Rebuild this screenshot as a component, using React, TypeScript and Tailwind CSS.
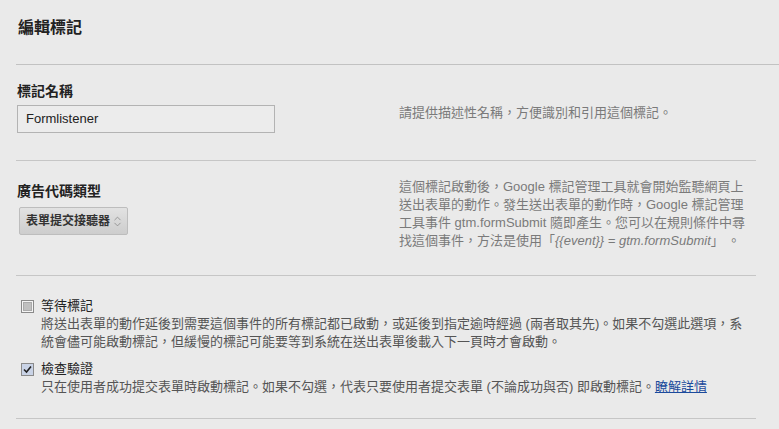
import { ChevronDown, ChevronUp } from "lucide-react";

const font = "font-['Liberation_Sans','Noto_Sans_CJK_TC',sans-serif]";

const Check = ({ checked }: { checked: boolean }) => (
    <span className="w-[13px] h-[13px] border border-[#8a8a8a] bg-[#f4f4f4] flex items-center justify-center shrink-0">
        {checked ? (
            <span className="w-[11px] h-[11px] bg-[#c9d3e6] flex items-center justify-center">
                <svg width="9" height="9" viewBox="0 0 9 9">
                    <path d="M1 4.5 L3.5 7 L8 1.5" fill="none" stroke="#222" strokeWidth="1.6" />
                </svg>
            </span>
        ) : (
            <span className="w-[9px] h-[9px] bg-[#c0c0c0] border border-[#aaa]" />
        )}
    </span>
);

const App = () => {
    return (
        <div className={`w-[779px] h-[429px] overflow-hidden bg-[#eaeaea] pl-4 text-[#222] ${font}`}>
            <div className="pt-[18px] pb-[26px] border-b border-[#c2c2c2]">
                <h1 className="text-[16px] leading-[20px] font-bold pl-[2px]">編輯標記</h1>
            </div>

            <div className="mr-[23px]">
                {/* tag name */}
                <div className="flex border-b border-[#c6c6c6] h-[96px]">
                    <div className="w-[383px] pt-[17px] pl-[1px]">
                        <h2 className="text-[14px] leading-[18px] font-bold">標記名稱</h2>
                        <div className="mt-[5px] w-[258px] h-[28px] border border-[#b3b3b3] bg-[#ececec] flex items-center pl-[8px] text-[13px]">
                            Formlistener
                        </div>
                    </div>
                    <p className="pt-[39px] text-[13px] leading-[18px] text-[#7a7a7a]">
                        請提供描述性名稱，方便識別和引用這個標記。
                    </p>
                </div>

                {/* tag type */}
                <div className="flex border-b border-[#c6c6c6] h-[115px]">
                    <div className="w-[383px] pt-[21px] pl-[1px]">
                        <h2 className="text-[14px] leading-[18px] font-bold">廣告代碼類型</h2>
                        <button className="mt-[7px] ml-[2px] w-[109px] h-[28px] rounded-[2px] border border-[#bdbdbd] bg-gradient-to-b from-[#e2e2e2] to-[#cdcdcd] flex items-center pl-[6px] pr-[4px] justify-between text-[12px] font-bold text-[#333]">
                            <span>表單提交接聽器</span>
                            <span className="flex flex-col items-center text-[#8a8a8a] -space-y-[5px]">
                                <ChevronUp size={11} strokeWidth={1.8} />
                                <ChevronDown size={11} strokeWidth={1.8} />
                            </span>
                        </button>
                    </div>
                    <p className="pt-[17px] text-[13px] leading-[18px] text-[#7a7a7a] whitespace-nowrap">
                        這個標記啟動後，Google 標記管理工具就會開始監聽網頁上<br />
                        送出表單的動作。發生送出表單的動作時，Google 標記管理<br />
                        工具事件 gtm.formSubmit 隨即產生。您可以在規則條件中尋<br />
                        找這個事件，方法是使用「<i>{"{{event}} = gtm.formSubmit"}</i>」 。
                    </p>
                </div>

                {/* options */}
                <div className="border-b border-[#c6c6c6] h-[143px] pt-[21px] pl-[5px] text-[13px] leading-[18px]">
                    <div className="flex items-center gap-[7px]">
                        <Check checked={false} />
                        <span>等待標記</span>
                    </div>
                    <p className="pl-[20px] text-[#555] whitespace-nowrap">
                        將送出表單的動作延後到需要這個事件的所有標記都已啟動，或延後到指定逾時經過 (兩者取其先)。如果不勾選此選項，系<br />
                        統會儘可能啟動標記，但緩慢的標記可能要等到系統在送出表單後載入下一頁時才會啟動。
                    </p>

                    <div className="flex items-center gap-[7px] mt-[9px]">
                        <Check checked={true} />
                        <span>檢查驗證</span>
                    </div>
                    <p className="pl-[20px] text-[#555] whitespace-nowrap">
                        只在使用者成功提交表單時啟動標記。如果不勾選，代表只要使用者提交表單 (不論成功與否) 即啟動標記。
                        <a href="#" className="text-[#1b4a9c] underline">瞭解詳情</a>
                    </p>
                </div>
            </div>
        </div>
    );
};

export default App;
